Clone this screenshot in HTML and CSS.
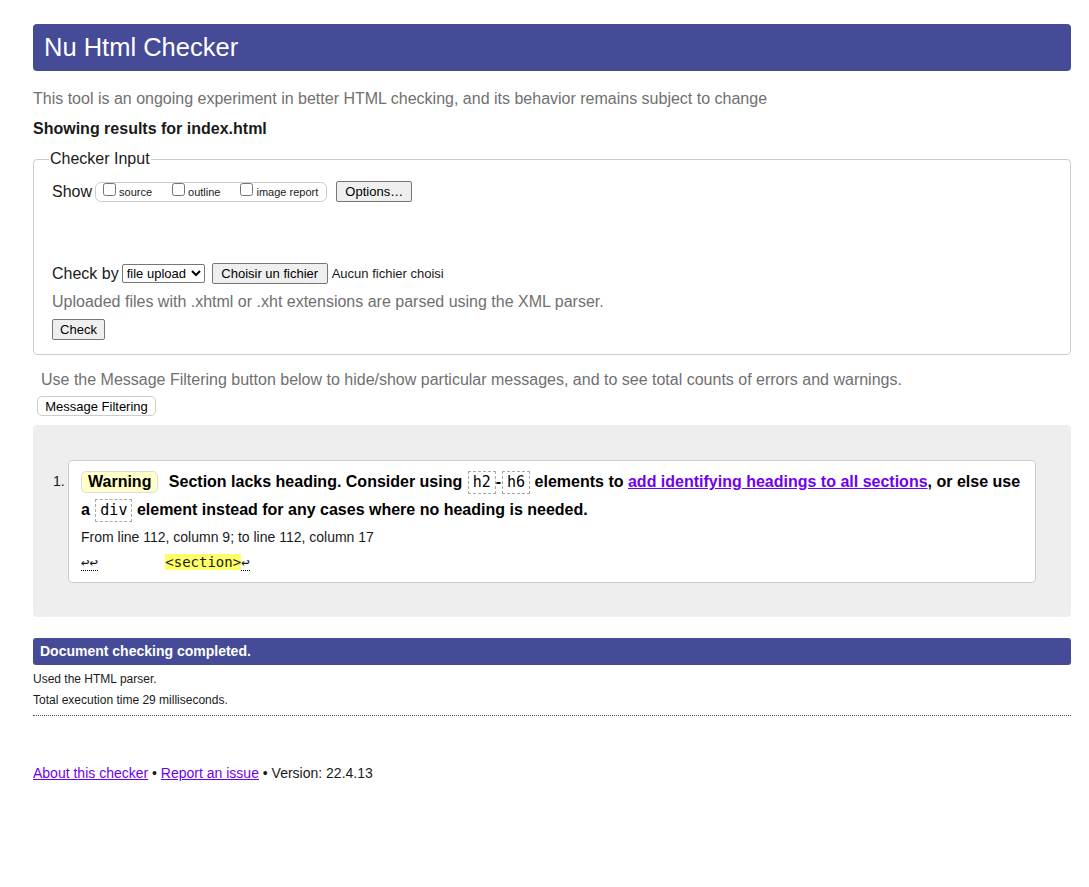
FILE: index.html
```html
<!DOCTYPE html>
<html lang="en">
<head>
<meta charset="utf-8">
<title>Nu Html Checker</title>
<link rel="stylesheet" href="styles.css">
</head>
<body>
<h1 class="title">Nu Html Checker</h1>
<p class="intro">This tool is an ongoing experiment in better HTML checking, and its behavior remains subject to change</p>
<p class="showing">Showing results for index.html</p>

<fieldset class="input">
  <legend>Checker Input</legend>
  <div class="row show-row">
    <span class="lbl">Show</span>
    <span class="opts">
      <label><input type="checkbox">source</label>
      <label><input type="checkbox">outline</label>
      <label><input type="checkbox">image report</label>
    </span>
    <button class="btn opt-btn">Options…</button>
  </div>
  <div class="row checkby-row">
    <span class="lbl">Check by</span>
    <select class="sel"><option>file upload</option></select>
    <button class="btn file-btn">Choisir un fichier</button>
    <span class="nofile">Aucun fichier choisi</span>
  </div>
  <p class="note">Uploaded files with .xhtml or .xht extensions are parsed using the XML parser.</p>
  <button class="btn check-btn">Check</button>
</fieldset>

<p class="filter-note">Use the Message Filtering button below to hide/show particular messages, and to see total counts of errors and warnings.</p>
<button class="btn filter-btn">Message Filtering</button>

<div class="results">
  <ol class="msgs">
    <li>
      <div class="msg">
        <p class="msg-text"><span class="badge">Warning</span> Section lacks heading. Consider using <code>h2</code>-<code>h6</code> elements to <a href="#">add identifying headings to all sections</a>, or else use a <code>div</code> element instead for any cases where no heading is needed.</p>
        <p class="loc">From line 112, column 9; to line 112, column 17</p>
        <p class="extract"><span class="lf">↩↩</span>        <b class="hl">&lt;section&gt;</b><span class="lf">↩</span></p>
      </div>
    </li>
  </ol>
</div>

<p class="done">Document checking completed.</p>
<p class="small">Used the HTML parser.</p>
<p class="small last">Total execution time 29 milliseconds.</p>

<p class="footer"><a href="#">About this checker</a> • <a href="#">Report an issue</a> • Version: 22.4.13</p>
</body>
</html>
```
FILE: styles.css
```css
body {
  margin: 0;
  padding: 24px 18px 0 33px;
  font-family: "Liberation Sans", Arial, sans-serif;
  color: #1a1a1a;
  background: #fff;
}
p { margin: 0; }
.title {
  margin: 0;
  height: 47px;
  line-height: 47px;
  background: #454b96;
  color: #fff;
  font-weight: normal;
  font-size: 25.5px;
  padding-left: 11px;
  border-radius: 4px;
}
.intro {
  margin-top: 19px;
  color: #707070;
  font-size: 16px;
  line-height: 18px;
}
.showing {
  margin-top: 12px;
  font-weight: bold;
  font-size: 16px;
  line-height: 18px;
}
.input {
  margin: 12px 0 0 0;
  border: 1px solid #ccc;
  border-radius: 4px;
  padding: 13px 18px 14px 18px;
  min-width: 0;
}
.input legend {
  padding: 0 1px;
  margin-left: -3px;
  font-size: 16px;
  color: #1a1a1a;
}
.row {
  display: flex;
  align-items: center;
}
.lbl { font-size: 16px; }
.opts {
  display: inline-flex;
  align-items: center;
  margin-left: 3px;
  height: 18px;
  border: 1px solid #ccc;
  border-radius: 6px;
  padding: 0 8px 0 0;
  font-size: 11px;
}
.opts label {
  display: inline-flex;
  align-items: center;
  margin-right: 20px;
}
.opts label:last-child { margin-right: 0; }
.opts input {
  margin: 0 3px 0 7px;
  width: 13px;
  height: 13px;
  position: relative;
  top: -2px;
}
.opts label + label input { margin-left: 0; }
.btn {
  font-family: "Liberation Sans", Arial, sans-serif;
  font-size: 13px;
  color: #000;
  background: #efefef;
  border: 1px solid #767676;
  border-radius: 2px;
  padding: 1px 6px;
  height: 21px;
}
.opt-btn { margin-left: 9px; width: 76px; height: 21px; }
.checkby-row { margin-top: 61px; }
.sel {
  margin-left: 3px;
  font-family: "Liberation Sans", Arial, sans-serif;
  font-size: 13px;
  height: 19px;
  width: 83px;
  padding: 0;
  border: 1px solid #767676;
  border-radius: 2px;
  background: #fff;
}
.file-btn { margin-left: 7px; width: 116px; }
.nofile { margin-left: 4px; font-size: 13px; }
.note {
  margin-top: 9px;
  color: #707070;
  font-size: 16px;
  line-height: 18px;
}
.check-btn {
  margin-top: 8px;
  width: 53px;
  height: 21px;
  display: block;
}
.filter-note {
  margin: 16px 0 0 8px;
  color: #707070;
  font-size: 16px;
  line-height: 18px;
}
.filter-btn {
  display: block;
  margin: 7px 0 0 4px;
  background: #fff;
  border: 1px solid #ccc;
  border-radius: 5px;
  height: 20px;
  width: 119px;
  padding: 0;
}
.results {
  margin-top: 9px;
  background: #eee;
  border-radius: 4px;
  padding: 35px 35px 34px 35px;
}
.msgs {
  margin: 0;
  padding: 0;
  list-style: none;
}
.msgs li {
  position: relative;
}
.msgs li::before {
  content: "1.";
  position: absolute;
  left: -15px;
  top: 11px;
  font-size: 14px;
  line-height: 20px;
  color: #1a1a1a;
}
.msg {
  background: #fff;
  border: 1px solid #ccc;
  border-radius: 4px;
  padding: 7px 12px 12px 12px;
}
.msg-text {
  font-weight: bold;
  font-size: 16px;
  line-height: 28px;
  color: #000;
}
.badge {
  display: inline-block;
  background: #ffffc9;
  border: 1px solid #ddd;
  border-radius: 5px;
  padding: 0 6px;
  line-height: 20px;
  margin-right: 6px;
}
code {
  font-family: "DejaVu Sans Mono", monospace;
  font-weight: normal;
  font-size: 15px;
  border: 1px dashed #aaa;
  padding: 1px 4px 2px 4px;
  margin-left: 1px;
}
.msg-text a { color: #7000f0; }
.loc {
  margin-top: 5px;
  font-size: 14px;
  line-height: 16px;
}
.extract {
  margin-top: 9px;
  font-family: "DejaVu Sans Mono", monospace;
  font-size: 14px;
  line-height: 16px;
  white-space: pre;
}
.lf {
  border-bottom: 1px dotted #000;
}
.hl {
  font-weight: normal;
  background: #ffff66;
}
.done {
  margin-top: 21px;
  background: #454b96;
  color: #fff;
  font-weight: bold;
  font-size: 14px;
  line-height: 27px;
  padding-left: 7px;
  border-radius: 3px;
}
.small {
  font-size: 12px;
  line-height: 13px;
  margin-top: 8px;
}
.last {
  margin-top: 8px;
  padding-bottom: 8px;
  border-bottom: 1px dotted #555;
}
.footer {
  margin-top: 49px;
  font-size: 14px;
  line-height: 16px;
}
.footer a { color: #7000f0; }
```
